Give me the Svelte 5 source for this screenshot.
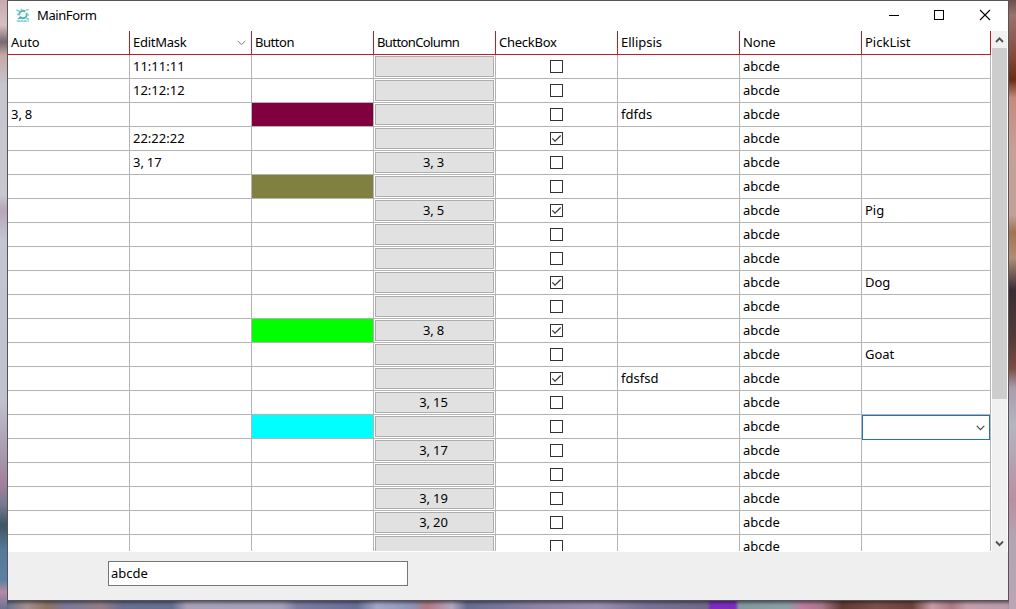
<script>
  const headers = [
    { text: 'Auto', spacing: -0.1 },
    { text: 'EditMask', spacing: -0.25, sorted: true },
    { text: 'Button', spacing: -0.45 },
    { text: 'ButtonColumn', spacing: -0.6 },
    { text: 'CheckBox', spacing: -0.25 },
    { text: 'Ellipsis', spacing: 0 },
    { text: 'None', spacing: -0.15 },
    { text: 'PickList', spacing: 0 }
  ];
  const blank = {};
  const rows = [
    { mask: '11:11:11' },
    { mask: '12:12:12' },
    { auto: '3, 8', color: '#800040', ellipsis: 'fdfds' },
    { mask: '22:22:22', checked: true },
    { mask: '3, 17', button: '3, 3' },
    { color: '#808040' },
    { button: '3, 5', checked: true, pick: 'Pig' },
    blank,
    blank,
    { checked: true, pick: 'Dog' },
    blank,
    { color: '#00ff00', button: '3, 8', checked: true },
    { pick: 'Goat' },
    { checked: true, ellipsis: 'fdsfsd' },
    { button: '3, 15' },
    { color: '#00ffff', editing: true },
    { button: '3, 17' },
    blank,
    { button: '3, 19' },
    { button: '3, 20' },
    blank
  ];
</script>

<div class="desktop">
  <div class="wall left"></div>
  <div class="middle">
    <div class="window">
      <header class="titlebar">
        <svg class="logo" width="16" height="16" viewBox="0 0 16 16" fill="none">
          <circle cx="8" cy="6.500" r="3.700" stroke="#4fb5b0" stroke-width="1.900" stroke-dasharray="9 1.500" />
          <path d="M1.500 2l3.500 1.500M6 .8l1 2M11 2.200l2.500-.7M2 6.500h2.500M12 6l2 1.500M11 10l3 1.500" stroke="#7accc9" stroke-width="1.400" />
          <path d="M2 11.500l3.500-3.500 1 2.500z" fill="#45b0a8" />
          <path d="M1.500 13.200h12.500" stroke="#9be3e3" stroke-width="1.600" />
          <path d="M3 13h8" stroke="#62cbd0" stroke-width="1" stroke-dasharray="2 1" />
        </svg>
        <span class="title">MainForm</span>
        <div class="caption">
          <svg width="46" height="30" viewBox="0 0 46 30"><path d="M18 14.500h10" stroke="#000" /></svg>
          <svg width="46" height="30" viewBox="0 0 46 30"><rect x="17.500" y="9.500" width="9" height="9" fill="none" stroke="#000" /></svg>
          <svg width="46" height="30" viewBox="0 0 46 30"><path d="M17 9l10 10M27 9l-10 10" stroke="#000" stroke-width="1.100" /></svg>
        </div>
      </header>

      <div class="content">
        <div class="table">
          <div class="row head">
            {#each headers as h}
              <div class="cell">
                <span style:letter-spacing="{h.spacing}px">{h.text}</span>
                {#if h.sorted}
                  <svg class="sort" width="9" height="6" viewBox="0 0 9 6" fill="none"><path d="M.7 1l3.800 3.600L8.300 1" stroke="#777" /></svg>
                {/if}
              </div>
            {/each}
          </div>
          {#each rows as r}
            <div class="row">
              <div class="cell">{r.auto ?? ''}</div>
              <div class="cell">{r.mask ?? ''}</div>
              <div class="cell" style:background-color={r.color}></div>
              <div class="cell btncell"><div class="btn">{r.button ?? ''}</div></div>
              <div class="cell check">
                <svg width="13" height="13" viewBox="0 0 13 13" fill="none">
                  <rect x=".5" y=".5" width="12" height="12" stroke="#333" />
                  {#if r.checked}<path d="M2.300 6.400l2.700 2.800L10.700 3.500" stroke="#333" stroke-width="1.200" />{/if}
                </svg>
              </div>
              <div class="cell">{r.ellipsis ?? ''}</div>
              <div class="cell">abcde</div>
              <div class="cell pick">
                {r.pick ?? ''}
                {#if r.editing}
                  <div class="combo">
                    <svg width="9" height="6" viewBox="0 0 9 6" fill="none"><path d="M.7 .8l3.800 3.800L8.300 .8" stroke="#444" stroke-width="1.100" /></svg>
                  </div>
                {/if}
              </div>
            </div>
          {/each}
        </div>
        <div class="scroll">
          <svg width="15" height="17" viewBox="0 0 15 17" fill="none"><path d="M4 11l3.500-3.600L11 11" stroke="#505050" stroke-width="1.800" /></svg>
          <div class="thumb"></div>
          <svg class="down" width="15" height="17" viewBox="0 0 15 17" fill="none"><path d="M4 6.500l3.500 3.600L11 6.500" stroke="#505050" stroke-width="1.800" /></svg>
        </div>
      </div>

      <footer class="footer"><div class="field">abcde</div></footer>
    </div>
    <div class="wall bottom"></div>
  </div>
  <div class="wall right"></div>
</div>

<style>
  :global(body) { margin: 0; overflow: hidden; }
  .desktop {
    display: grid;
    grid-template-columns: 7px 1002px 7px;
    width: 1016px;
    height: 609px;
    overflow: hidden;
    font: 13px/24px "Noto Sans", "Noto Sans CJK SC", sans-serif;
    word-spacing: -.5px;
    color: #000;
  }
  .left {
    background: linear-gradient(#c9a8ae 0, #d5bfc1 25px, #76696f 42px, #c5a7a6 55px, #c6c5cd 85px, #c8c6d0 195px, #b7a6b7 210px, #c3c5d1 240px, #bfc1cd 400px, #a799ac 455px, #a0809a 485px, #777890 505px, #3e5662 525px, #55799a 550px, #5c7fa3 580px, #b58ba5 592px, #6a7390 609px);
  }
  .right {
    background: linear-gradient(#6d4e4b 0, #9a716b 15px, #865145 50px, #6c2d15 80px, #c28b7c 98px, #c6a096 150px, #bfa197 215px, #a07451 232px, #b18c75 258px, #3c2c33 290px, #543b37 340px, #7a4b42 368px, #a79cad 388px, #b4b4c2 425px, #b98f9f 500px, #b5a4b3 540px, #b9a5b6 609px);
  }
  .bottom {
    background: linear-gradient(90deg, #6a7390 0, #a38f8e 20px, #8e7260 40px, #78799a 60px, #927d84 95px, #686e91 115px, #65708f 165px, #a7a1b7 180px, #a2a0b9 275px, #7b7da0 290px, #686f98 350px, #a1a8c5 370px, #8c93b7 405px, #b17881 420px, #b1a6c0 445px, #666d8f 460px, #8d83a5 530px, #9a8fae 590px, #777194 640px, #706989 700px, #7d2bc0 704px, #7d2bc0 728px, #80999d 732px, #87a1a5 780px, #bd7ba0 795px, #a77889 815px, #5e3b32 835px, #7c514a 870px, #6c4138 905px, #c79ca7 925px, #a97883 945px, #c39fab 960px, #b99ba9 1002px);
  }
  .middle { display: flex; flex-direction: column; min-width: 0; }
  .wall.bottom { flex: 1; box-shadow: inset 0 3px 3px -1px rgba(20, 15, 30, .5); }
  .window {
    box-sizing: border-box;
    height: 601px;
    border: 1px solid #555258;
    display: flex;
    flex-direction: column;
    background: #fff;
  }
  .titlebar { display: flex; align-items: center; height: 30px; padding-left: 7px; flex: none; }
  .logo { margin-right: 6px; }
  .title { letter-spacing: -.4px; padding-bottom: 2px; }
  .caption { display: flex; margin-left: auto; margin-right: -1px; }
  .caption svg { display: block; }
  .content { display: flex; height: 521px; flex: none; overflow: hidden; }
  .table { width: 983px; flex: none; height: 520px; overflow: hidden; }
  .row { display: grid; grid-template-columns: repeat(7, 122px) 129px; height: 24px; }
  .cell {
    box-sizing: border-box;
    height: 24px;
    padding-left: 3px;
    line-height: 23px;
    border-right: 1px solid #b4b4b4;
    border-bottom: 1px solid #b4b4b4;
    white-space: nowrap;
    background-clip: padding-box;
  }
  .head .cell {
    display: flex;
    align-items: center;
    justify-content: space-between;
    border-color: #bd1d24;
    padding-right: 5px;
  }
  .btncell { padding: 1px; }
  .btn {
    box-sizing: border-box;
    height: 21px;
    line-height: 19px;
    border: 1px solid #adadad;
    background: #e1e1e1;
    text-align: center;
    padding-right: 2px;
  }
  .check { display: flex; align-items: center; justify-content: center; padding: 0; }
  .pick { position: relative; }
  .combo {
    position: absolute;
    left: 0;
    top: 0;
    box-sizing: border-box;
    width: 128px;
    height: 25px;
    border: 1px solid #1f74b8;
    background: #fff;
    display: flex;
    align-items: center;
    justify-content: flex-end;
    padding-right: 4px;
    z-index: 1;
  }
  .scroll { width: 15px; margin-left: 1px; background: #f0f0f0; display: flex; flex-direction: column; }
  .scroll svg { display: block; flex: none; }
  .thumb { height: 351px; background: #cdcdcd; }
  .down { margin-top: auto; }
  .footer { flex: 1; background: #efefef; padding: 9px 0 0 100px; }
  .field {
    box-sizing: border-box;
    width: 300px;
    height: 25px;
    padding-left: 2px;
    line-height: 22px;
    border: 1px solid #767676;
    background: #fff;
  }
</style>
